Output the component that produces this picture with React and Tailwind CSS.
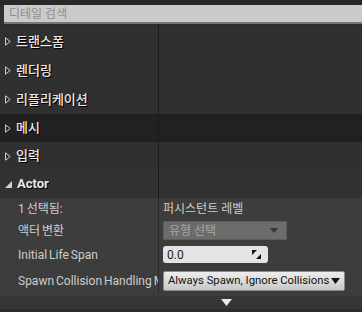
import React from "react";

const font = { fontFamily: 'Roboto, "Noto Sans CJK KR", sans-serif' };

function Tri() {
  return (
    <svg width="6" height="9" viewBox="0 0 6 9" className="shrink-0">
      <path d="M0.5 0.8 L5.2 4.5 L0.5 8.2 Z" fill="none" stroke="#cfcfcf" strokeWidth="1" />
    </svg>
  );
}

function Header({ label, dark, h }) {
  return (
    <div className={`flex ${h} ${dark ? "bg-[#212121]" : "bg-[#303030]"}`}>
      <div className="w-[158px] shrink-0 flex items-center gap-[5px] pl-[5px]">
        <Tri />
        <span className="text-[13px] text-[#e8e8e8] font-medium [text-shadow:1px_1px_0_#000]">{label}</span>
      </div>
      <div className="w-px shrink-0 bg-[#1b1b1b]" />
      <div className="flex-1" />
    </div>
  );
}

function PropRow({ label, children, h }) {
  return (
    <div className={`flex ${h}`}>
      <div className="w-[158px] shrink-0 flex items-center pl-[18px] overflow-hidden whitespace-nowrap text-[12px] text-[#cdcdcd]">
        <span className="whitespace-nowrap [word-spacing:-1px]">{label}</span>
      </div>
      <div className="w-px shrink-0 bg-[#2a2a2a]" />
      <div className="flex-1 min-w-0 flex items-center pl-[4px]">{children}</div>
    </div>
  );
}

export default function App() {
  return (
    <div style={font} className="w-[362px] h-[312px] bg-[#303030] overflow-hidden flex flex-col">
      <div className="h-[5px] shrink-0 bg-[#282828]" />
      <div className="h-[19px] shrink-0 ml-[4px] bg-[#cbcbcb] border-b-[2px] border-[#757575] flex items-center pl-[5px]">
        <span className="text-[12px] text-[#8e8e8e]">디테일 검색</span>
      </div>
      <div className="flex h-[3px] shrink-0 bg-[#2c2c2c]">
        <div className="w-[158px]" />
        <div className="w-px bg-[#1b1b1b]" />
      </div>
      <Header label="트랜스폼" h="h-[29px]" />
      <Header label="렌더링" h="h-[29px]" />
      <Header label="리플리케이션" h="h-[29px]" />
      <Header label="메시" dark h="h-[28px]" />
      <Header label="입력" h="h-[28px]" />
      <div className="flex h-[28px] shrink-0 bg-[#323232]">
        <div className="w-[158px] shrink-0 flex items-center gap-[5px] pl-[5px]">
          <svg width="7" height="7" viewBox="0 0 7 7" className="shrink-0">
            <path d="M7 0 L7 7 L0 7 Z" fill="#d0d0d0" />
          </svg>
          <span className="text-[13px] text-[#eaeaea] font-bold [text-shadow:1px_1px_0_#000]">Actor</span>
        </div>
        <div className="w-px shrink-0 bg-[#1b1b1b]" />
        <div className="flex-1" />
      </div>
      <div className="bg-[#3d3d3d] flex flex-col shrink-0">
        <PropRow label="1 선택됨:" h="h-[22px]">
          <span className="text-[12px] text-[#cdcdcd]">퍼시스턴트 레벨</span>
        </PropRow>
        <PropRow label="액터 변환" h="h-[21px]">
          <div className="w-[124px] h-[19px] bg-[#6c6c6c] border border-[#5c5c5c] flex items-center pl-[5px] pr-[8px] justify-between">
            <span className="text-[12px] text-[#a6a6a6]">유형 선택</span>
            <svg width="8" height="5" viewBox="0 0 8 5"><path d="M0 0 H8 L4 5 Z" fill="#343434" /></svg>
          </div>
        </PropRow>
        <PropRow label="Initial Life Span" h="h-[27px]">
          <div className="w-[105px] h-[17px] bg-[#e4e4e4] rounded-[3px] flex items-center pl-[4px] pr-[7px] justify-between">
            <span className="text-[12px] text-[#1a1a1a]">0.0</span>
            <svg width="9" height="9" viewBox="0 0 9 9">
              <path d="M0 0 H5 L0 5 Z" fill="#111" />
              <path d="M9 9 H4 L9 4 Z" fill="#111" />
            </svg>
          </div>
        </PropRow>
        <PropRow label="Spawn Collision Handling M" h="h-[26px]">
          <div className="w-[182px] shrink-0 h-[20px] bg-gradient-to-b from-[#ededed] to-[#c8c8c8] rounded-[2px] border border-[#8a8a8a] flex items-center pl-[4px] pr-[4px] justify-between">
            <span className="text-[11.3px] text-[#111] whitespace-nowrap">Always Spawn, Ignore Collisions</span>
            <svg width="9" height="6" viewBox="0 0 9 6" className="shrink-0"><path d="M0 0 H9 L4.5 6 Z" fill="#111" /></svg>
          </div>
        </PropRow>
      </div>
      <div className="h-[2px] shrink-0 bg-[#3d3d3d]" />
      <div className="h-[13px] shrink-0 bg-[#363636] flex justify-center items-center">
        <svg width="11" height="7" viewBox="0 0 11 7" className="ml-[90px]"><path d="M0 0 H11 L5.5 7 Z" fill="#e8e8e8" /></svg>
      </div>
      <div className="flex-1 bg-[#2c2c2c]" />
    </div>
  );
}
